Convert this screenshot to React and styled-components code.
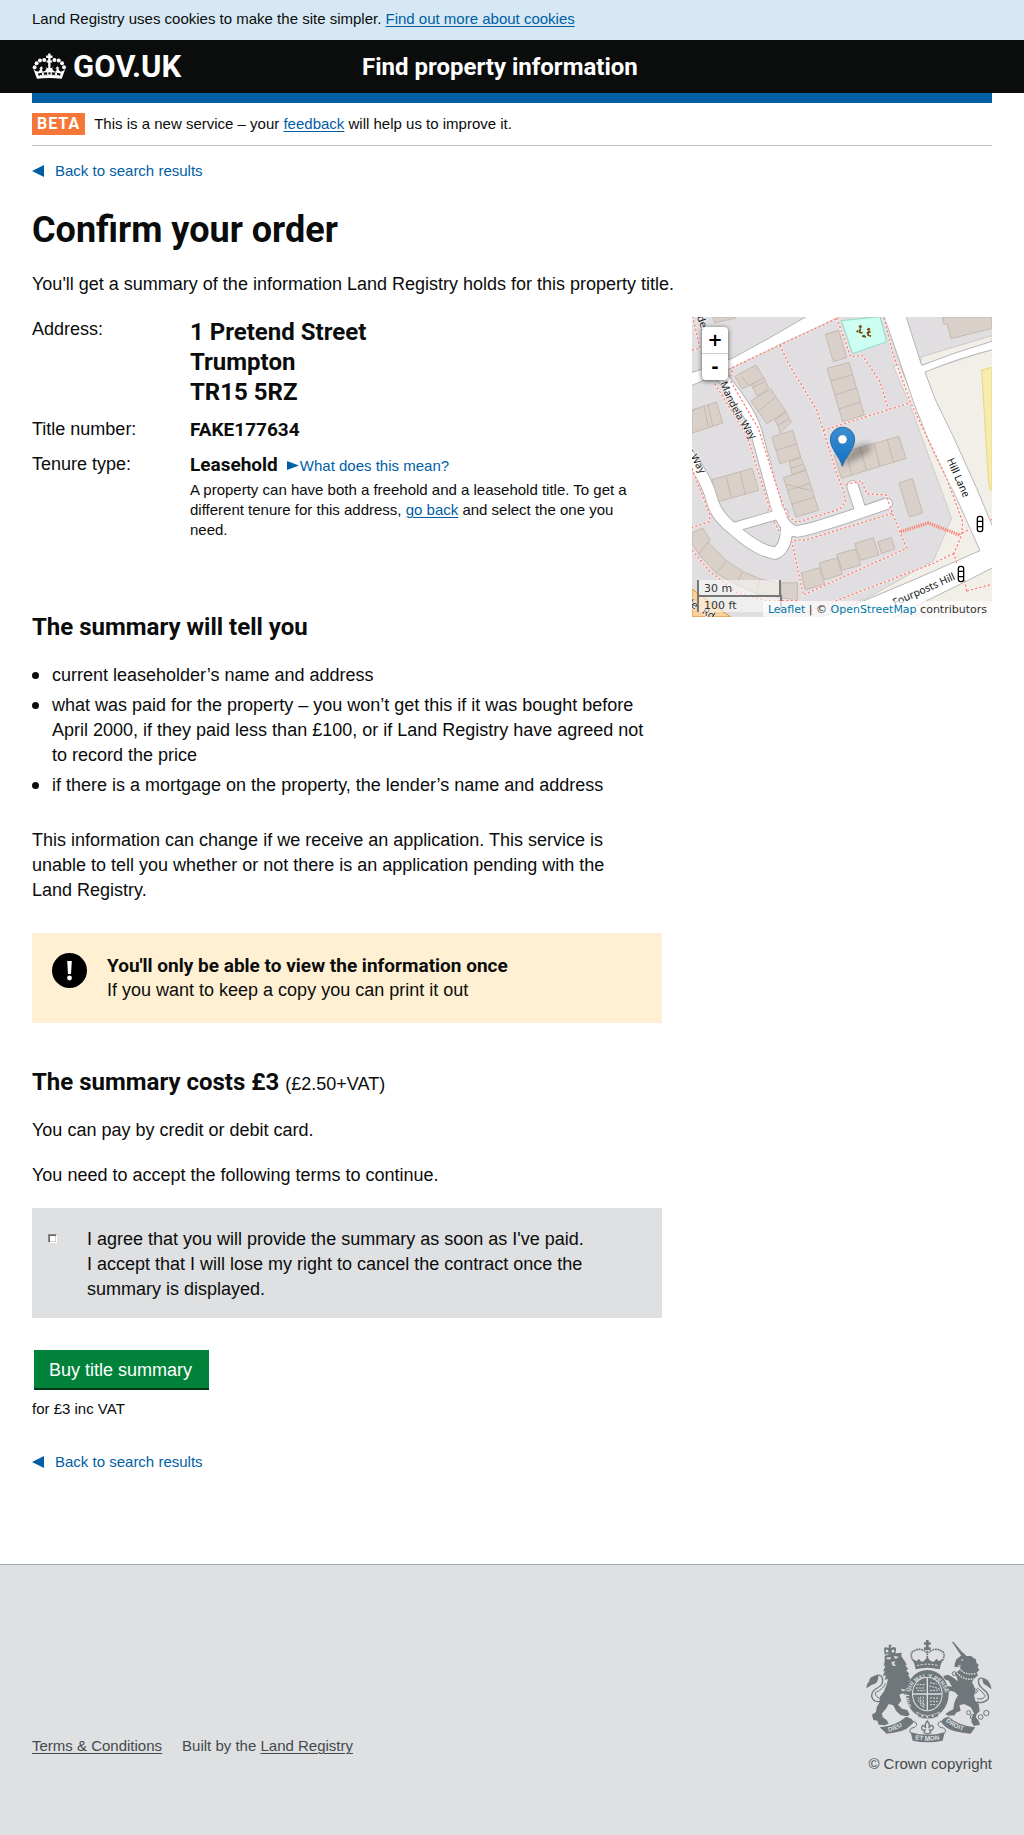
import React from "react";
import styled, { createGlobalStyle, css } from "styled-components";

const ink = "#0b0c0c";
const link = "#005ea5";
const panel = "#dee0e2";
const textFont = `"Liberation Sans", Arial, sans-serif`;
const boldFont = `Roboto, "Liberation Sans", sans-serif`;

const GlobalStyle = createGlobalStyle`
  *, *::before, *::after { box-sizing: border-box; }
  body {
    margin: 0;
    background: #fff;
    color: ${ink};
    font-family: ${textFont};
    font-size: 18px;
    line-height: 25px;
    -webkit-font-smoothing: antialiased;
  }
  h1, h2, p, ul, dl, dd { margin: 0; padding: 0; }
  h1, h2, strong { font-family: ${boldFont}; font-weight: 700; }
`;

const Container = styled.div`
  max-width: 1024px;
  margin: 0 auto;
  padding: 0 32px;
`;

const small = css`
  font-size: 15px;
  line-height: 20px;
`;

const bold = css`
  font-family: ${boldFont};
  font-weight: 700;
`;

const regular = css`
  font-family: ${textFont};
  font-weight: 400;
`;

const Link = styled.a`
  color: ${(p) => p.$color || link};
  text-decoration: ${(p) => (p.$plain ? "none" : "underline")};
  text-underline-offset: 2px;
  text-decoration-thickness: 1px;
`;

const CookieBar = styled.div`
  background: #d5e8f3;
  padding: 9px 0 11px;
  ${small}
`;

const HeaderBar = styled.header`
  background: ${ink};
`;

const HeaderRow = styled(Container)`
  display: grid;
  grid-template-columns: 330px 1fr;
  align-items: center;
  height: 53px;
`;

const Logo = styled.a`
  display: flex;
  align-items: center;
  gap: 6px;
  color: #fff;
  text-decoration: none;
  font-size: 31px;
  line-height: 30px;
  ${bold}
  svg { display: block; }
`;

const ServiceName = styled.span`
  color: #fff;
  font-size: 24px;
  line-height: 30px;
  ${bold}
`;

const BlueRule = styled.div`
  height: 10px;
  background: ${link};
`;

const PhaseBanner = styled.div`
  display: flex;
  align-items: center;
  gap: 9px;
  padding: 10px 0;
  border-bottom: 1px solid #bfc1c3;
  ${small}
`;

const PhaseTag = styled.strong`
  background: #f47738;
  color: #fff;
  padding: 1px 5px;
  font-size: 16px;
  letter-spacing: 1px;
`;

const BackLink = styled.a`
  display: inline-flex;
  align-items: center;
  gap: 11px;
  margin-top: ${(p) => p.$top}px;
  color: ${link};
  text-decoration: none;
  vertical-align: top;
  ${small}
`;

const PageTitle = styled.h1`
  margin-top: 29px;
  font-size: 36px;
  line-height: 40px;
`;

const Lead = styled.p`
  margin-top: 22px;
`;

const Columns = styled.div`
  display: grid;
  grid-template-columns: minmax(0, 1fr) 300px;
  gap: 30px;
  align-items: start;
  margin-top: 20px;
`;

const Details = styled.dl`
  display: grid;
  grid-template-columns: 158px 1fr;
  row-gap: 10px;
`;

const Address = styled.dd`
  font-size: 24px;
  line-height: 30px;
  ${bold}
`;

const Value = styled.dd`
  font-size: 19px;
  ${bold}
`;

const HelpLink = styled(Link)`
  display: inline-flex;
  align-items: center;
  gap: 1px;
  margin-left: 9px;
  vertical-align: 1px;
  ${regular}
  ${small}
`;

const TenureNote = styled.p`
  margin-top: 3px;
  padding-right: 20px;
  ${regular}
  ${small}
`;

const Heading = styled.h2`
  margin-top: ${(p) => p.$top}px;
  font-size: 24px;
  line-height: 30px;
  small {
    font-size: 18px;
    line-height: 18px;
    ${regular}
  }
`;

const Bullets = styled.ul`
  display: grid;
  gap: 5px;
  margin-top: 21px;
  list-style: none;
`;

const Bullet = styled.li`
  display: flex;
  gap: 13px;
  &::before {
    content: "";
    flex: none;
    width: 7px;
    height: 7px;
    margin-top: 9px;
    border-radius: 50%;
    background: ${ink};
  }
`;

const Para = styled.p`
  margin-top: ${(p) => p.$top || 20}px;
  padding-right: 20px;
`;

const Notice = styled.div`
  display: flex;
  gap: 20px;
  margin-top: 30px;
  padding: 20px;
  min-height: 90px;
  background: #fff0d3;
  svg { flex: none; }
  strong { display: block; font-size: 19px; }
`;

const Terms = styled.div`
  display: grid;
  grid-template-columns: 10px 1fr;
  column-gap: 29px;
  margin-top: 20px;
  padding: 19px 50px 16px 16px;
  background: ${panel};
`;

const Tick = styled.input`
  appearance: none;
  width: 9px;
  height: 9px;
  margin: 7px 0 0;
  background: #fff;
  border: 1px solid;
  border-color: #8a8a8a #fff #fff #8a8a8a;
  box-shadow: inset 1px 1px 0 #666, inset -1px -1px 0 #d4d0c8;
`;

const BuyButton = styled.button`
  display: block;
  margin: 32px 2px 0;
  padding: 8px 17px 5px 15px;
  border: 0;
  background: #00823b;
  box-shadow: 0 2px 0 #003618;
  color: #fff;
  font: inherit;
`;

const PriceNote = styled.p`
  margin-top: 11px;
  ${small}
`;

const Footer = styled.footer`
  margin-top: 92px;
  padding: 74px 0 63px;
  border-top: 1px solid #a1acb2;
  background: ${panel};
  color: #454a4c;
  ${small}
`;

const FooterRow = styled(Container)`
  display: flex;
  justify-content: space-between;
  align-items: flex-end;
`;

const FooterLinks = styled.div`
  display: flex;
  gap: 20px;
  padding-bottom: 18px;
`;

const Copyright = styled.a`
  display: flex;
  flex-direction: column;
  align-items: flex-end;
  gap: 11px;
  color: inherit;
  text-decoration: none;
`;

/* ---------- map ---------- */

const MapBox = styled.div`
  position: relative;
  height: 300px;
  overflow: hidden;
  font-family: "DejaVu Sans", sans-serif;
  > svg { display: block; }
`;

const ZoomControl = styled.div`
  position: absolute;
  top: 10px;
  left: 10px;
  width: 26px;
  border-radius: 4px;
  background: #fff;
  box-shadow: 0 1px 5px rgba(0, 0, 0, 0.65);
`;

const ZoomButton = styled.button`
  display: block;
  width: 26px;
  height: 26px;
  padding: 0;
  border: 0;
  background: none;
  color: #000;
  font: 700 18px/24px "DejaVu Sans", sans-serif;
  & + & {
    height: 27px;
    border-top: 1px solid #ccc;
  }
`;

const Scale = styled.div`
  position: absolute;
  left: 5px;
  bottom: 5px;
  color: #333;
  font-size: 11px;
  line-height: 17px;
`;

const ScaleLine = styled.div`
  width: ${(p) => p.$width}px;
  height: 17px;
  padding-left: 5px;
  border: 2px solid #777;
  border-top: 0;
  background: rgba(255, 255, 255, 0.5);
  & + & {
    border: 2px solid #777;
    border-bottom: 0;
    margin-top: -2px;
  }
`;

const Attribution = styled.div`
  position: absolute;
  right: 0;
  bottom: 0;
  padding: 1px 5px 0;
  background: rgba(255, 255, 255, 0.7);
  color: #333;
  font-size: 11px;
  line-height: 15px;
  white-space: nowrap;
`;

const buildings = [
  "98,36 167,36 165,40 105,53",
  "788,36 936,36 936,70 813,101 802,58 790,56",
  "436,88 476,76 500,158 460,170",
  "441,190 507,172 553,330 488,350",
  "165,214 228,180 252,220 186,252",
  "214,240 252,218 266,250 232,274",
  "213,288 272,252 318,320 260,356",
  "284,345 318,322 334,352 300,384 296,366",
  "276,396 338,376 362,456 300,476",
  "328,470 362,458 378,494 336,508",
  "310,518 378,496 416,616 348,636",
  "36,315 110,291 128,354 36,384",
  "96,524 216,490 236,556 116,590",
  "462,450 656,394 678,460 484,520",
  "657,534 697,520 728,624 688,636",
  "363,804 418,788 434,838 376,854",
  "417,774 472,758 487,808 434,824",
  "470,748 526,732 542,780 487,796",
  "524,716 580,698 597,750 542,766",
  "594,710 634,697 645,732 604,746",
  "36,684 68,669 90,704 84,712 140,768 190,800 240,822 302,834 352,833 352,884 304,880 230,866 168,838 108,804 60,752 36,716",
];

const walls =
  "M452,228 516,210 M464,270 528,250 M475,312 541,292 M220,246 254,230 M186,216 206,242 M232,320 288,276 M292,362 326,342 M288,436 350,416 M318,538 390,556 M324,556 392,535 M336,597 404,576 M332,490 368,478 M72,304 86,368 M46,312 36,320 M84,300 98,362 M138,512 154,578 M180,500 196,568 M498,440 516,510 M540,428 560,496 M582,416 600,484 M622,404 640,472 M52,752 84,712 M108,804 140,768 M168,838 188,800 M230,866 240,822 M304,880 302,834";

const footpaths = [
  "M36,135 60,130 44,60 38,36",
  "M152,215 160,186 300,120 476,38",
  "M300,120 325,175 410,315 430,376 468,500 492,560 496,590 480,612 350,652 320,630 295,560 235,370 150,225",
  "M470,38 512,155 548,152 600,230 625,312 M430,376 692,293",
  "M612,38 640,150 692,293 800,520 848,650 845,690 822,745 830,775 M822,745 760,775 370,925",
  "M104,236 200,390 270,612 262,616",
  "M36,490 90,630 88,650 36,668 M36,735 90,800 170,862 260,888 352,886",
  "M498,538 545,528 560,566 618,570 640,632 680,730 370,870 335,708 380,704 640,624",
  "M835,690 870,672 M860,858 936,838 M860,858 852,820 M936,644 925,646 M282,650 300,684",
];

function StreetMap() {
  return (
    <svg width="100%" height="300" viewBox="36 36 900 900" preserveAspectRatio="xMidYMid slice" aria-hidden="true">
      <defs>
        <linearGradient id="pin" x1="0" y1="0" x2="0" y2="1">
          <stop offset="0" stopColor="#3a8fd0" />
          <stop offset="1" stopColor="#126fc6" />
        </linearGradient>
        <filter id="soft" x="-50%" y="-50%" width="200%" height="200%">
          <feGaussianBlur stdDeviation="9" />
        </filter>
        <path id="mandela" d="M120,234 Q152,320 216,408" />
      </defs>
      <rect x="36" y="36" width="900" height="900" fill="#e0dee0" />
      <path d="M640,184 658,180 905,740 440,936 420,930 560,880 760,768 815,640 690,300Z" fill="#f2efe9" stroke="#c4c0bb" strokeWidth="2" />
      <path d="M735,200 936,135 936,936 600,936 936,790Z" fill="#f2efe9" />
      <path d="M725,155 936,92 936,110 720,182Z" fill="#f2efe9" stroke="#bbb" strokeWidth="2" />
      <path d="M905,195 936,187 936,558 930,552 925,520Z" fill="#f7ecaf" stroke="#e8d877" strokeWidth="3" />
      <path
        d="M612,34 678,34 725,181 Q830,140 938,108 L938,134 Q840,158 735,201 L765,282 820,395 890,550 938,665 938,788 860,828 720,897 640,938 420,938 560,884 700,825 900,737 830,580 755,430 700,290 658,166Z"
        fill="#fff" stroke="#aaa" strokeWidth="2.5"
      />
      <path d="M34,203 Q110,180 160,158 Q270,100 380,34 L480,34 Q380,82 300,118 Q210,165 152,190 L34,242Z" fill="#fff" stroke="#aaa" strokeWidth="2.5" />
      {[["#aaa", 5], ["#fff", 0]].map(([color, extra]) => (
        <g key={color} fill="none" stroke={color} strokeLinecap="round" strokeLinejoin="round">
          <path d="M120,208 C180,280 222,340 234,400 L288,600 Q312,678 352,679 Q390,676 620,596" strokeWidth={32 + extra} />
          <path d="M518,544 540,612" strokeWidth={32 + extra} />
          <path d="M160,667 310,624" strokeWidth={26 + extra} />
          <path d="M24,450 Q80,520 98,590 Q110,635 160,672 Q230,736 285,745 Q318,732 320,670" strokeWidth={34 + extra} />
        </g>
      ))}
      <path d="M36,852 Q95,895 152,936 L36,936Z" fill="#fbd09b" stroke="#d1913d" strokeWidth="3" />
      <path d="M484,47 592,36 600,36 620,110 518,146Z" fill="#ccfff1" stroke="#8edcc5" strokeWidth="3" />
      <g fill="#d9d0c9" stroke="#c2b3a7" strokeWidth="2.5">
        {buildings.map((points) => <polygon key={points} points={points} />)}
        <path d={walls} fill="none" />
      </g>
      <g fill="none" stroke="#fff" strokeOpacity=".5" strokeWidth="7">
        {footpaths.map((d) => <path key={d} d={d} />)}
      </g>
      <g fill="none" stroke="#fa8478" strokeWidth="4" strokeDasharray="7 6">
        {footpaths.map((d) => <path key={d} d={d} />)}
      </g>
      <path d="M662,680 745,654 838,690" fill="none" stroke="#fa8478" strokeWidth="10" strokeDasharray="4 3" />
      <g fill="#734a08" stroke="#734a08">
        <circle cx="541" cy="65" r="4" /><circle cx="566" cy="73" r="4" /><circle cx="552" cy="93" r="3" />
        <path d="M541,70 539,82 548,84 M535,76 530,82 M566,78 564,90 573,94 M560,84 572,80 M546,93 558,96" fill="none" strokeWidth="5" />
      </g>
      <g fontFamily="'Noto Sans', sans-serif" fontSize="31" fill="#111" stroke="#fff" strokeWidth="3" paintOrder="stroke">
        <text><textPath href="#mandela">Mandela Way</textPath></text>
        <text transform="translate(20 437) rotate(60)">r Way</text>
        <text transform="translate(800 465) rotate(66)">Hill Lane</text>
        <text transform="translate(644 904) rotate(-24)">Fourposts Hill</text>
        <text transform="translate(44 18) rotate(70)">nde.</text>
        <text transform="translate(24 900) rotate(32)">le</text>
        <text transform="translate(64 924) rotate(32)">Rd.</text>
      </g>
      {[[900, 657], [843, 807]].map(([x, y]) => (
        <g key={x} fill="#fff" stroke="#000" strokeWidth="4">
          <rect x={x - 8} y={y - 23} width="16" height="46" rx="7" />
          <path d={`M${x - 8},${y - 8}h16 M${x - 8},${y + 8}h16`} />
        </g>
      ))}
      <path d="M487,484 Q500,420 560,416 Q590,422 560,446Z" fill="#000" opacity=".3" filter="url(#soft)" />
      <path d="M487,484 C480,456 451,432 451,403 A36.500,36.500 0 0 1 524,403 C524,432 495,456 487,484Z" fill="url(#pin)" stroke="#2a6ea6" strokeWidth="3" />
      <circle cx="487.500" cy="403" r="14" fill="#fff" stroke="#2a6ea6" strokeWidth="2" />
    </svg>
  );
}

/* ---------- drawings ---------- */

function CrownIcon() {
  return (
    <svg width="35" height="27" viewBox="36 37 106 80" fill="#fff" aria-hidden="true">
      <path d="M85,38h7v6h6v7h-6v8h5v6h-5v14h-7v-14h-5v-6h5v-8h-6v-7h6z" />
      <circle cx="44" cy="79" r="6" /><circle cx="50" cy="67" r="6" /><circle cx="60" cy="59" r="6" /><circle cx="73" cy="57" r="6" />
      <circle cx="133" cy="79" r="6" /><circle cx="127" cy="67" r="6" /><circle cx="117" cy="59" r="6" /><circle cx="104" cy="57" r="6" />
      <path d="M40,84 Q48,94 56,92 L62,84 58,83 64,76 70,83 66,84 68,92 Q76,94 80,84 L77,79 84,82 88,76 93,82 100,79 97,84 Q101,94 109,92 L111,84 107,83 113,76 119,83 115,84 121,92 Q129,94 137,84 L126,114 Q88,109 51,114Z" />
      <path d="M54,98 Q88,91 123,98 L121,105 Q88,100 56,105Z" fill={ink} />
      <path d="M60,103h6v-7h6v6h10v-8h4v7h6v-7h4v8h10v-6h6v7h6l-2,3Q88,100 60,106Z" />
    </svg>
  );
}

function WarningIcon() {
  return (
    <svg width="35" height="35" viewBox="0 0 35 35" aria-hidden="true">
      <circle cx="17.500" cy="17.500" r="17.500" fill="#000" />
      <path d="M15.200 8h4.600l-.8 13h-3z" fill="#fff" />
      <circle cx="17.500" cy="25" r="2.400" fill="#fff" />
    </svg>
  );
}

function Triangle({ right }) {
  return right ? (
    <svg width="12" height="9" viewBox="0 0 12 9" fill={link} aria-hidden="true"><path d="M0 0 12 4.500 0 9z" /></svg>
  ) : (
    <svg width="12" height="12" viewBox="0 0 12 12" fill={link} aria-hidden="true"><path d="M12 0v12L0 6z" /></svg>
  );
}

function Crest() {
  const g = "#6f777b";
  return (
    <svg width="126" height="104" viewBox="80 57 378 312" fill={g} aria-hidden="true">
      <defs>
        <path id="garter" d="M217,262 A55,58 0 1 1 311,262" />
        <path id="scrollL" d="M148,336 Q182,326 206,306" />
        <path id="scrollM" d="M221,357 Q264,366 308,357" />
        <path id="scrollR" d="M319,304 Q342,325 384,336" />
      </defs>
      <g fill="none" stroke={g} strokeWidth="4">
        <path d="M122,244 Q102,248 97,230 Q96,212 114,204 Q134,194 129,174 Q123,158 103,171" />
        <path d="M130,238 Q106,232 108,218 Q134,206 138,190" strokeWidth="3" />
        <path d="M413,246 Q432,252 446,238 Q452,222 432,208 Q414,194 418,178 Q426,170 438,180" />
        <path d="M413,236 Q432,240 438,228 Q430,214 414,204" strokeWidth="3" />
      </g>
      <path d="M81,205 Q82,190 90,184 Q88,174 104,168 Q122,163 116,178 Q114,192 98,194Z" />
      <path d="M457,208 Q454,190 444,180 Q434,172 430,178 Q428,190 440,196Z" />
      <path d="M136,104 L134,88 Q133,82 140,82 L148,84 149,79 147,79 147,76 150,76 150,73 153,73 153,76 157,76 157,79 154,79 155,84 163,81 Q171,82 170,88 L168,104 Q152,98 136,104Z" />
      <path d="M139,93 Q139,86 146,90 L148,96 141,98Z M165,93 Q164,86 158,90 L156,96 164,98Z" fill={panel} />
      <path d="M136,108 L152,101 172,100 187,98 186,108 192,118 198,126 202,134 198,136 207,148 200,150 210,162 206,166 214,178 208,184 212,200 206,208 218,222 234,232 242,246 234,256 226,248 214,244 208,232 190,220 180,224 186,242 176,254 188,266 204,270 211,284 204,289 184,286 170,272 162,256 148,252 140,266 128,280 130,292 142,300 148,311 136,316 118,314 114,302 102,300 98,284 110,276 112,262 120,248 122,230 134,214 142,194 146,176 136,180 140,166 130,168 137,154 131,154 138,140 134,136 136,122Z" />
      <path d="M141,113 155,111 153,118 143,118Z M164,108 178,110 171,116 165,115Z M156,126 168,124 164,132 172,137 160,137Z M184,206 203,210 190,214Z" fill={panel} />
      <path d="M338,66 342,65 376,105 368,110Z" />
      <path d="M351,118 L364,108 372,98 381,108 396,108 402,114 410,118 411,128 418,134 415,142 420,150 412,158 416,166 405,176 398,186 404,198 409,214 404,226 408,242 418,252 421,274 412,282 410,292 418,302 422,314 404,318 396,306 398,290 404,280 394,262 374,252 360,256 364,272 350,278 346,286 326,287 318,282 330,274 342,268 344,252 348,240 356,226 346,216 334,212 324,218 318,210 326,198 338,200 328,182 316,178 312,168 326,164 340,172 356,184 352,170 346,160 358,152 364,142 357,140 346,142 346,132Z" />
      <path d="M364,120 372,117 370,123Z M355,136 366,136 360,140Z" fill={panel} />
      <path d="M352,158 Q376,184 406,176 M360,146 Q380,168 410,160" stroke={panel} strokeWidth="4" fill="none" strokeDasharray="5 3" />
      <g fill="none" stroke={g} strokeWidth="3">
        <circle cx="345" cy="161" r="6" /><circle cx="408" cy="213" r="6" /><circle cx="408" cy="264" r="6" />
        <circle cx="388" cy="278" r="6" /><circle cx="400" cy="291" r="7" /><circle cx="424" cy="291" r="7" /><circle cx="441" cy="279" r="8" />
      </g>
      <path d="M260,60h8v7h6v7h-6v8h6v8h-20v-8h6v-8h-6v-7h6z" />
      <g fill="none" stroke={g} strokeWidth="5" strokeDasharray="6 2">
        <path d="M232,134 Q206,108 221,94 Q244,80 262,98" />
        <path d="M298,134 Q324,108 309,94 Q286,80 268,98" />
        <path d="M264,92V124" />
      </g>
      <path d="M222,118 232,124 238,116 246,125 254,123 264,112 274,123 283,125 292,116 298,124 308,118 301,148 Q264,138 229,148Z" />
      <path d="M233,137 Q264,128 297,137" stroke={panel} strokeWidth="3" fill="none" strokeDasharray="7 4" />
      <ellipse cx="264" cy="222" rx="64" ry="72" />
      <ellipse cx="264" cy="222" rx="46" ry="52" fill={panel} />
      <ellipse cx="264" cy="222" rx="43" ry="49" />
      <path d="M264,173V271 M221,222H307" stroke={panel} strokeWidth="4" />
      <path d="M232,194h24 M230,204h26 M234,212h22 M272,188 292,192 M270,198 300,206 M272,212 302,210 M236,232 258,258 M236,240 254,264 M244,230V258 M252,230V262 M272,234h28 M272,244h26 M272,254h20" stroke={panel} strokeWidth="3" strokeDasharray="6 3" fill="none" />
      <g fontFamily="'Liberation Sans', sans-serif" fontWeight="700" fill={panel}>
        <text fontSize="17"><textPath href="#garter" startOffset="2">SOIT QUI MAL Y PENSE</textPath></text>
        <path d="M232,276 Q264,298 300,276 L296,290 Q264,304 236,290Z" fill={g} stroke={panel} strokeWidth="2" />
        <circle cx="249" cy="288" r="3" /><circle cx="264" cy="291" r="3" /><circle cx="280" cy="288" r="3" />
      </g>
      <path d="M121,322 Q170,318 200,290 Q222,294 222,308 L212,318 Q196,336 142,341Z" />
      <path d="M408,322 Q356,316 328,290 Q306,294 306,308 L316,318 Q334,336 394,341Z" />
      <path d="M214,337 Q264,352 316,337 L310,362 Q264,372 220,362Z" />
      <g fill="none" stroke={g} strokeWidth="3">
        <path d="M202,312 Q226,296 232,312 Q232,322 218,324 Q208,328 214,340" />
        <path d="M326,312 Q302,296 296,312 Q296,322 312,324 Q322,328 316,340" />
      </g>
      <path d="M264,303 Q274,314 268,324 Q278,310 282,322 Q282,332 271,330 L274,338 264,342 254,338 257,330 Q246,332 247,322 Q250,310 260,324 Q254,314 264,303Z" fill="none" stroke={g} strokeWidth="4" />
      <g fontFamily="'Liberation Sans', sans-serif" fontWeight="700" fontSize="19" fill={panel}>
        <text><textPath href="#scrollL">DIEU</textPath></text>
        <text><textPath href="#scrollM" startOffset="6">ET MON</textPath></text>
        <text><textPath href="#scrollR">DROIT</textPath></text>
      </g>
    </svg>
  );
}

export default function App() {
  return (
    <>
      <GlobalStyle />
      <CookieBar>
        <Container>
          Land Registry uses cookies to make the site simpler. <Link href="#cookies">Find out more about cookies</Link>
        </Container>
      </CookieBar>
      <HeaderBar>
        <HeaderRow>
          <Logo href="#home"><CrownIcon />GOV.UK</Logo>
          <ServiceName>Find property information</ServiceName>
        </HeaderRow>
      </HeaderBar>
      <Container as="main">
        <BlueRule />
        <PhaseBanner>
          <PhaseTag>BETA</PhaseTag>
          <span>This is a new service – your <Link href="#feedback">feedback</Link> will help us to improve it.</span>
        </PhaseBanner>
        <BackLink href="#results" $top={15}><Triangle />Back to search results</BackLink>
        <PageTitle>Confirm your order</PageTitle>
        <Lead>You'll get a summary of the information Land Registry holds for this property title.</Lead>
        <Columns>
          <div>
            <Details>
              <dt>Address:</dt>
              <Address>1 Pretend Street<br />Trumpton<br />TR15 5RZ</Address>
              <dt>Title number:</dt>
              <Value>FAKE177634</Value>
              <dt>Tenure type:</dt>
              <Value>
                Leasehold
                <HelpLink href="#tenure" $plain><Triangle right />What does this mean?</HelpLink>
                <TenureNote>
                  A property can have both a freehold and a leasehold title. To get a different tenure for this
                  address, <Link href="#back">go back</Link> and select the one you need.
                </TenureNote>
              </Value>
            </Details>
            <Heading $top={72}>The summary will tell you</Heading>
            <Bullets>
              <Bullet>current leaseholder’s name and address</Bullet>
              <Bullet>
                what was paid for the property – you won’t get this if it was bought before April 2000, if they paid
                less than £100, or if Land Registry have agreed not to record the price
              </Bullet>
              <Bullet>if there is a mortgage on the property, the lender’s name and address</Bullet>
            </Bullets>
            <Para $top={30}>
              This information can change if we receive an application. This service is unable to tell you whether or
              not there is an application pending with the Land Registry.
            </Para>
            <Notice>
              <WarningIcon />
              <p><strong>You'll only be able to view the information once</strong>If you want to keep a copy you can print it out</p>
            </Notice>
            <Heading $top={44}>The summary costs £3 <small>(£2.50+VAT)</small></Heading>
            <Para $top={21}>You can pay by credit or debit card.</Para>
            <Para>You need to accept the following terms to continue.</Para>
            <Terms>
              <Tick type="checkbox" id="agree" />
              <label htmlFor="agree">
                I agree that you will provide the summary as soon as I've paid.<br />
                I accept that I will lose my right to cancel the contract once the summary is displayed.
              </label>
            </Terms>
            <BuyButton type="button">Buy title summary</BuyButton>
            <PriceNote>for £3 inc VAT</PriceNote>
            <BackLink href="#results" $top={33}><Triangle />Back to search results</BackLink>
          </div>
          <MapBox>
            <StreetMap />
            <ZoomControl>
              <ZoomButton type="button" aria-label="Zoom in">+</ZoomButton>
              <ZoomButton type="button" aria-label="Zoom out">-</ZoomButton>
            </ZoomControl>
            <Scale>
              <ScaleLine $width={84}>30 m</ScaleLine>
              <ScaleLine $width={85}>100 ft</ScaleLine>
            </Scale>
            <Attribution>
              <Link href="#leaflet" $plain $color="#0078a8">Leaflet</Link> | © <Link href="#osm" $plain $color="#0078a8">OpenStreetMap</Link> contributors
            </Attribution>
          </MapBox>
        </Columns>
      </Container>
      <Footer>
        <FooterRow>
          <FooterLinks>
            <Link href="#terms" $color="#454a4c">Terms &amp; Conditions</Link>
            <span>Built by the <Link href="#registry" $color="#454a4c">Land Registry</Link></span>
          </FooterLinks>
          <Copyright href="#crown"><Crest />© Crown copyright</Copyright>
        </FooterRow>
      </Footer>
    </>
  );
}
